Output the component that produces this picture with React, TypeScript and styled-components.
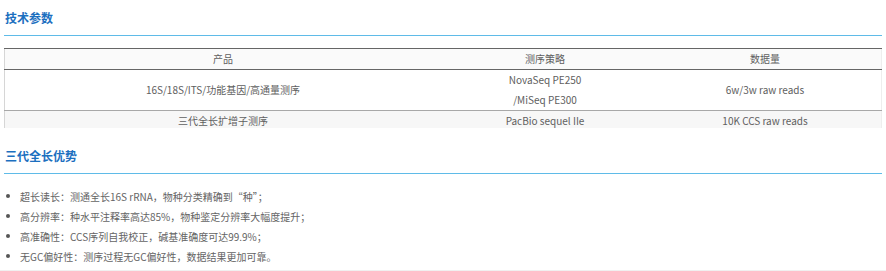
import React from "react";
import styled, { createGlobalStyle } from "styled-components";

const GlobalStyle = createGlobalStyle`
  html, body {
    margin: 0;
    padding: 0;
    background: #ffffff;
  }
  body {
    font-family: "Noto Sans CJK SC", "Noto Sans", sans-serif;
    color: #666666;
  }
`;

const Page = styled.div`
  width: 878px;
  height: 270px;
  padding: 0 4px;
  border-bottom: 1px solid #f0f0f0;
  overflow: hidden;
`;

const SectionHeader = styled.h2<{ $gap?: number }>`
  margin: ${(p) => p.$gap ?? 0}px 0 0;
  padding: 8px 0 7px 1px;
  font-size: 12px;
  line-height: 20px;
  font-weight: 700;
  color: #1c6fbf;
  border-bottom: 1px solid #5fbbe8;
`;

const TableViewport = styled.div`
  margin-top: 12px;
  height: 80px;
  overflow: hidden;
`;

const SpecTable = styled.table`
  width: 100%;
  border-collapse: collapse;
  font-size: 10px;
  color: #606060;
  border-left: 1px solid #d6d6d6;
  border-right: 1px solid #eeeeee;
`;

const HeadRow = styled.tr`
  background: #fafafa;
  border-top: 1px solid #666666;
  border-bottom: 1px solid #666666;
`;

const BodyRow = styled.tr<{ $shade?: boolean }>`
  background: ${(p) => (p.$shade ? "#f7f7f7" : "#ffffff")};
  border-bottom: 1px solid #a8a8a8;
`;

const Cell = styled.td<{ $w?: number; $h: number }>`
  width: ${(p) => (p.$w ? `${p.$w}px` : "auto")};
  height: ${(p) => p.$h}px;
  padding: 0;
  text-align: center;
  vertical-align: middle;
  font-weight: 400;
  line-height: 20px;
`;

const HeadCell = styled(Cell).attrs({ as: "th" })``;

const Bullets = styled.ul`
  list-style: none;
  margin: 12px 0 0;
  padding: 0;
`;

const Bullet = styled.li`
  display: flex;
  align-items: center;
  height: 20px;
  font-size: 10px;
  color: #646464;
  &::before {
    content: "";
    width: 4px;
    height: 4px;
    border-radius: 50%;
    background: #555555;
    margin: 0 10px 0 2px;
    flex: none;
  }
`;

const advantages = [
  "超长读长：测通全长16S rRNA，物种分类精确到“种”；",
  "高分辨率：种水平注释率高达85%，物种鉴定分辨率大幅度提升；",
  "高准确性：CCS序列自我校正，碱基准确度可达99.9%；",
  "无GC偏好性：测序过程无GC偏好性，数据结果更加可靠。",
];

export default function App() {
  return (
    <>
      <GlobalStyle />
      <Page>
        <SectionHeader>技术参数</SectionHeader>
        <TableViewport>
          <SpecTable>
            <thead>
              <HeadRow>
                <HeadCell $w={436} $h={19}>产品</HeadCell>
                <HeadCell $w={208} $h={19}>测序策略</HeadCell>
                <HeadCell $h={19}>数据量</HeadCell>
              </HeadRow>
            </thead>
            <tbody>
              <BodyRow>
                <Cell $h={39}>16S/18S/ITS/功能基因/高通量测序</Cell>
                <Cell $h={39}>
                  NovaSeq PE250
                  <br />
                  /MiSeq PE300
                </Cell>
                <Cell $h={39}>6w/3w raw reads</Cell>
              </BodyRow>
              <BodyRow $shade>
                <Cell $h={20}>三代全长扩增子测序</Cell>
                <Cell $h={20}>PacBio sequel IIe</Cell>
                <Cell $h={20}>10K CCS raw reads</Cell>
              </BodyRow>
            </tbody>
          </SpecTable>
        </TableViewport>
        <SectionHeader $gap={10}>三代全长优势</SectionHeader>
        <Bullets>
          {advantages.map((t) => (
            <Bullet key={t}>{t}</Bullet>
          ))}
        </Bullets>
      </Page>
    </>
  );
}
